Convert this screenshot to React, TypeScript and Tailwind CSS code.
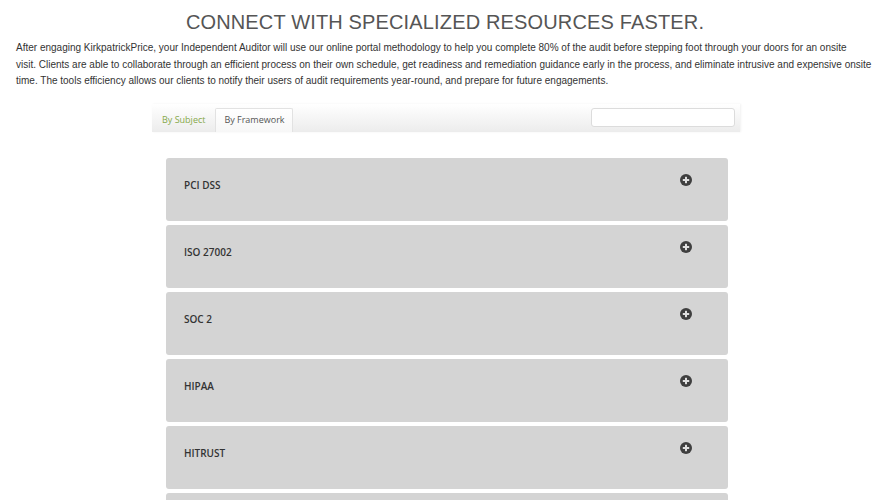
import React from "react";

const items = ["PCI DSS", "ISO 27002", "SOC 2", "HIPAA", "HITRUST", "GDPR"];

function PlusIcon() {
  return (
    <svg width="12" height="12" viewBox="0 0 12 12">
      <circle cx="6" cy="6" r="6" fill="#3f3f3f" />
      <rect x="2.8" y="5" width="6.4" height="2" fill="#e0e0e0" />
      <rect x="5" y="2.8" width="2" height="6.4" fill="#e0e0e0" />
    </svg>
  );
}

export default function App() {
  return (
    <div className="w-[890px] h-[500px] overflow-hidden bg-white">
      <div className="px-4">
        <h1
          className="text-center text-[20px] leading-[24px] text-[#555] pt-[10px] tracking-[0.15px]"
          style={{ fontFamily: '"Liberation Sans", Arial, sans-serif' }}
        >
          CONNECT WITH SPECIALIZED RESOURCES FASTER.
        </h1>
        <p
          className="mt-[6px] text-[10px] leading-[16.5px] text-[#333]"
          style={{ fontFamily: '"Liberation Sans", Arial, sans-serif' }}
        >
          After engaging KirkpatrickPrice, your Independent Auditor will use our online portal methodology to help you complete 80% of the audit before stepping foot through your doors for an onsite
          <br />
          visit. Clients are able to collaborate through an efficient process on their own schedule, get readiness and remediation guidance early in the process, and eliminate intrusive and expensive onsite time. The tools efficiency allows our clients to notify their users of audit requirements year-round, and prepare for future engagements.
        </p>
      </div>
      <div
        className="ml-[152px] w-[588px] mt-[14px]"
        style={{ fontFamily: '"Open Sans", sans-serif' }}
      >
        <div className="flex items-end justify-between h-[28px] bg-gradient-to-b from-white to-[#ececec] shadow-[1px_0_2px_rgba(0,0,0,0.06)]">
          <div className="flex items-end h-full">
            <div className="pl-[10px] pr-[10px] h-[24px] flex items-center text-[9px] text-[#86a94a]">By Subject</div>
            <div className="w-[78px] h-[24px] flex items-center justify-center text-[9px] text-[#555] bg-gradient-to-b from-white to-[#f7f7f7] border border-b-0 border-[#e2e2e2] rounded-t-[2px]">
              By Framework
            </div>
          </div>
          <div className="self-start mt-[4px] mr-[5px] w-[144px] h-[19px] bg-white border border-[#dcdcdc] rounded-[3px]" />
        </div>
        <div className="ml-[14px] w-[562px] mt-[26px] flex flex-col gap-[4px]">
          {items.map((t) => (
            <div
              key={t}
              className="h-[63px] bg-[#d4d4d4] rounded-[3px] flex items-start justify-between pl-[18px] pr-[36px] shrink-0"
            >
              <span className="mt-[20px] text-[10px] font-semibold text-[#333]">{t}</span>
              <span className="mt-[16px]"><PlusIcon /></span>
            </div>
          ))}
        </div>
      </div>
    </div>
  );
}
